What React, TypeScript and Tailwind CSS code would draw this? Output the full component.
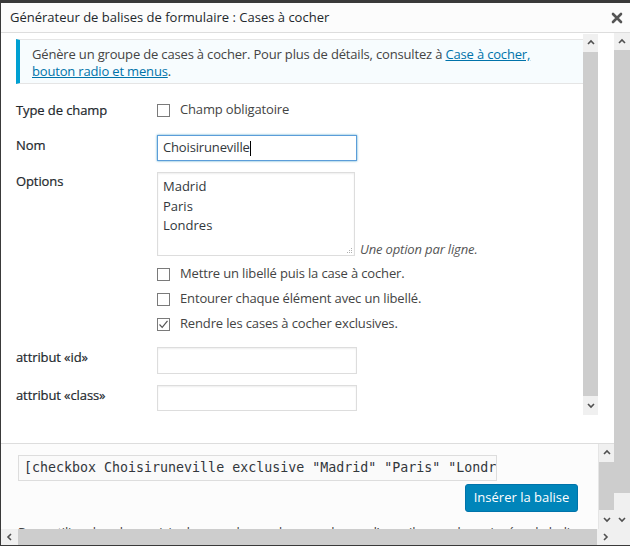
import React from 'react';

const font = "font-['Open_Sans','Noto_Sans',sans-serif]";

function Chevron({ dir, className = '' }: { dir: 'up' | 'down' | 'left' | 'right'; className?: string }) {
    const pts = {
        up: '1,5 4,2 7,5',
        down: '1,2 4,5 7,2',
        left: '5,1 2,4 5,7',
        right: '2,1 5,4 2,7',
    }[dir];
    return (
        <svg width="8" height="8" viewBox="0 0 8 8" className={className}>
            <polyline points={pts} fill="none" stroke="#505050" strokeWidth="1.6" />
        </svg>
    );
}

// vertical scrollbar: arrow boxes, a thumb and the empty track below it
function VScroll({ top, thumb, rest, bottom }: { top: number; thumb: number; rest: number; bottom: number }) {
    return (
        <div className="flex flex-col w-full bg-[#f0f0f0]">
            <div className="flex items-center justify-center" style={{ height: top }}>
                <Chevron dir="up" />
            </div>
            <div className="bg-[#cdcdcd]" style={{ height: thumb }} />
            <div style={{ height: rest }} />
            <div className="flex items-center justify-center" style={{ height: bottom }}>
                <Chevron dir="down" />
            </div>
        </div>
    );
}

function Checkbox({ checked = false }: { checked?: boolean }) {
    return (
        <span className="w-[13px] h-[13px] border border-[#7a7a7a] bg-white flex items-center justify-center shrink-0">
            {checked && (
                <svg width="11" height="11" viewBox="0 0 11 11">
                    <polyline points="1.5,5.5 4.2,8.3 9.5,1.8" fill="none" stroke="#555" strokeWidth="1.2" />
                </svg>
            )}
        </span>
    );
}

function CheckRow({ label, checked, className = '' }: { label: string; checked?: boolean; className?: string }) {
    return (
        <div className={`flex items-center h-[20px] pl-[141px] ${className}`}>
            <Checkbox checked={checked} />
            <span className="ml-[10px] text-[13px] tracking-[-0.15px] text-[#444]">{label}</span>
        </div>
    );
}

function Label({ children }: { children: React.ReactNode }) {
    return (
        <div className="w-[141px] shrink-0 text-[13px] leading-[20px] tracking-[-0.1px] text-[#23282d] [-webkit-text-stroke:0.2px_#23282d]">
            {children}
        </div>
    );
}

export default function App() {
    return (
        <div className={`w-[630px] h-[546px] flex flex-col bg-white border-t-[3px] border-l border-b border-[#3a3a3a] overflow-hidden ${font}`}>
            {/* title bar */}
            <div className="h-[30px] shrink-0 flex items-center justify-between pl-[9px] pr-[7px] border-b border-[#dddddd] bg-[#fcfcfc]">
                <span className="text-[13px] text-[#23282d]">Générateur de balises de formulaire : Cases à cocher</span>
                <svg width="12" height="12" viewBox="0 0 12 12">
                    <path d="M2 2 L10 10 M10 2 L2 10" stroke="#555" strokeWidth="2.6" strokeLinecap="round" />
                </svg>
            </div>

            <div className="flex flex-1 min-h-0">
                <div className="flex flex-col w-[613px]">
                    {/* form panel */}
                    <div className="h-[410px] flex shrink-0">
                        <div className="w-[582px] pl-[15px] pt-[6px]">
                            <div className="border-l-4 border-[#00a0d2] border-y border-y-[#e5e5e5] bg-[#f7fcfe] pl-[12px] pr-2 pt-[6px] pb-[3px] text-[13px] leading-[17px] tracking-[-0.17px] text-[#444]">
                                Génère un groupe de cases à cocher. Pour plus de détails, consultez à{' '}
                                <a className="text-[#0073aa] underline">Case à cocher, bouton radio et menus</a>.
                            </div>

                            <div className="flex items-center h-[20px] mt-[16px]">
                                <Label>Type de champ</Label>
                                <Checkbox />
                                <span className="ml-[10px] text-[13px] tracking-[-0.15px] text-[#444]">Champ obligatoire</span>
                            </div>

                            <div className="flex mt-[15px]">
                                <Label>Nom</Label>
                                <div className="w-[200px] h-[26px] border border-[#5b9dd9] shadow-[0_0_2px_rgba(30,140,190,0.8)] flex items-center px-[5px] text-[13px] tracking-[-0.15px] text-[#32373c]">
                                    Choisiruneville
                                    <span className="w-px h-[15px] bg-black" />
                                </div>
                            </div>

                            <div className="flex mt-[11px] items-end">
                                <div className="w-[141px] shrink-0 self-start text-[13px] leading-[18px] tracking-[-0.1px] text-[#23282d] [-webkit-text-stroke:0.2px_#23282d]">
                                    Options
                                </div>
                                <div className="relative w-[198px] h-[84px] border border-[#dddddd] px-[5px] pt-[4px] text-[13px] leading-[19.5px] text-[#32373c] shadow-[inset_0_1px_2px_rgba(0,0,0,0.07)]">
                                    <div>Madrid</div>
                                    <div>Paris</div>
                                    <div>Londres</div>
                                    <svg width="7" height="7" viewBox="0 0 7 7" className="absolute right-[1px] bottom-[1px]">
                                        <g fill="#b0b0b0">
                                            <rect x="5" y="1" width="1" height="1" />
                                            <rect x="3" y="3" width="1" height="1" />
                                            <rect x="5" y="3" width="1" height="1" />
                                            <rect x="1" y="5" width="1" height="1" />
                                            <rect x="3" y="5" width="1" height="1" />
                                            <rect x="5" y="5" width="1" height="1" />
                                        </g>
                                    </svg>
                                </div>
                                <span className="ml-[5px] mb-[-1px] text-[13px] leading-[16px] italic tracking-[-0.15px] text-[#555]">Une option par ligne.</span>
                            </div>

                            <CheckRow className="mt-[8px]" label="Mettre un libellé puis la case à cocher." />
                            <CheckRow className="mt-[5px]" label="Entourer chaque élément avec un libellé." />
                            <CheckRow className="mt-[5px]" label="Rendre les cases à cocher exclusives." checked />

                            <div className="flex mt-[13px]">
                                <Label>attribut «id»</Label>
                                <div className="w-[200px] h-[27px] border border-[#dddddd] shadow-[inset_0_1px_2px_rgba(0,0,0,0.07)]" />
                            </div>
                            <div className="flex mt-[11px]">
                                <Label>attribut «class»</Label>
                                <div className="w-[200px] h-[26px] border border-[#dddddd] shadow-[inset_0_1px_2px_rgba(0,0,0,0.07)]" />
                            </div>
                        </div>
                        <div className="w-[15px] mt-px self-start">
                            <VScroll top={18} thumb={344} rest={0} bottom={19} />
                        </div>
                    </div>

                    {/* insert tag panel */}
                    <div className="h-[86px] shrink-0 flex border-t border-[#dddddd] bg-[#fcfcfc]">
                        <div className="w-[598px] overflow-hidden pl-[17px] pt-[11px] border-r border-[#e5e5e5]">
                            <div className="w-[479px] h-[26px] border border-[#dddddd] bg-[#fafafa] overflow-hidden whitespace-nowrap pl-[5px] flex items-center font-['DejaVu_Sans_Mono',monospace] text-[13.3px] text-[#32373c]">
                                [checkbox Choisiruneville exclusive "Madrid" "Paris" "Londres"]
                            </div>
                            <div className="flex justify-end pr-[20px] mt-[3px]">
                                <button className="w-[113px] h-[28px] rounded-[3px] bg-[#0085ba] border border-[#0073aa] text-white text-[13px]">
                                    Insérer la balise
                                </button>
                            </div>
                            <p className="mt-[12px] whitespace-nowrap text-[13px] leading-[17px] tracking-[-0.15px] text-[#444]">
                                Pour utiliser la valeur saisie dans ce champ dans un champ d’e-mail, vous devez insérer la balise correspondante
                            </p>
                        </div>
                        <div className="w-[15px]">
                            <VScroll top={18} thumb={48} rest={0} bottom={19} />
                        </div>
                    </div>

                    {/* horizontal scrollbar */}
                    <div className="h-[16px] shrink-0 flex bg-[#f0f0f0]">
                        <div className="w-[17px] flex items-center justify-center">
                            <Chevron dir="left" />
                        </div>
                        <div className="w-[579px] bg-[#cdcdcd]" />
                        <div className="flex-1 flex items-center justify-center">
                            <Chevron dir="right" />
                        </div>
                    </div>
                </div>

                {/* page scrollbar */}
                <div className="w-[16px] flex flex-col bg-[#f0f0f0]">
                    <VScroll top={17} thumb={443} rest={18} bottom={18} />
                    <div className="flex-1 bg-[#f0f0f0]" />
                </div>
            </div>
        </div>
    );
}
